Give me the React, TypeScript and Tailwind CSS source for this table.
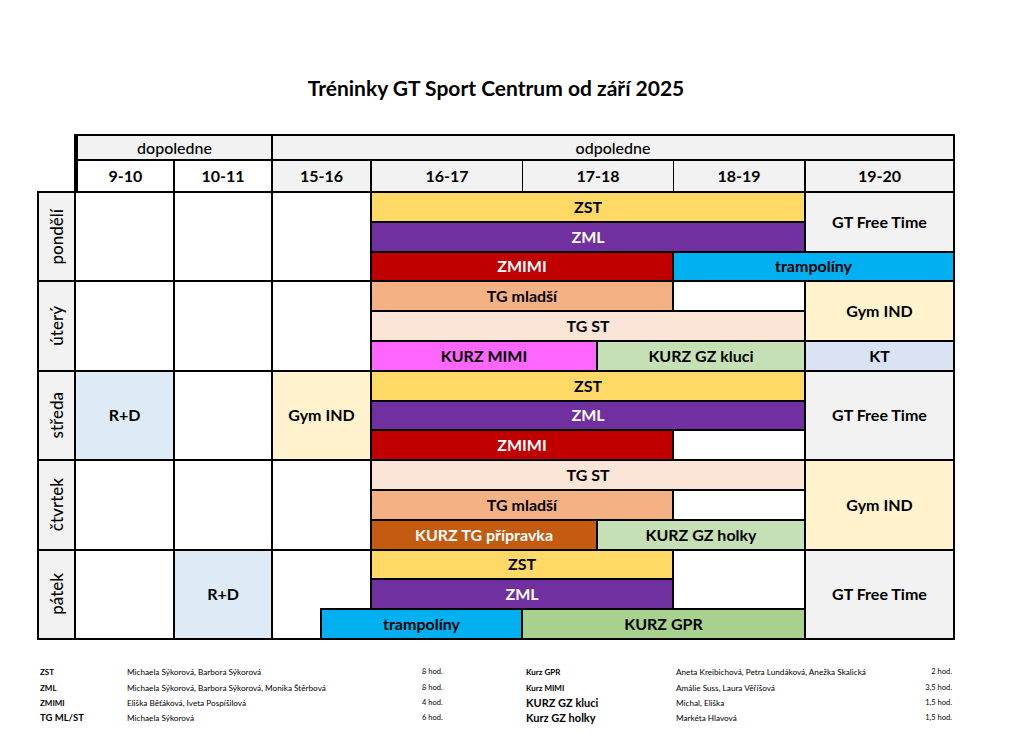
import React from 'react';

type Cell = { pos: string; bg: string; label?: string; white?: boolean; extra?: string };

const font = "font-['Lato','Liberation_Sans',sans-serif]";

// timetable cells, grid lines: 1 day | 2 9-10 | 3 10-11 | 4-5 15-16 | 6 16-17 | 7-8 17-18 | 9 18-19 | 10 19-20
const cells: Cell[] = [
  // pondělí
  { pos: 'col-start-2 col-end-3 row-start-3 row-end-6', bg: 'bg-white' },
  { pos: 'col-start-3 col-end-4 row-start-3 row-end-6', bg: 'bg-white' },
  { pos: 'col-start-4 col-end-6 row-start-3 row-end-6', bg: 'bg-white' },
  { pos: 'col-start-6 col-end-10 row-start-3 row-end-4', bg: 'bg-[#ffd966]', label: 'ZST' },
  { pos: 'col-start-6 col-end-10 row-start-4 row-end-5', bg: 'bg-[#7030a0]', label: 'ZML', white: true },
  { pos: 'col-start-10 col-end-11 row-start-3 row-end-5', bg: 'bg-[#f2f2f2]', label: 'GT Free Time' },
  { pos: 'col-start-6 col-end-9 row-start-5 row-end-6', bg: 'bg-[#c00000]', label: 'ZMIMI', white: true },
  { pos: 'col-start-9 col-end-11 row-start-5 row-end-6', bg: 'bg-[#00b0f0]', label: 'trampolíny' },

  // úterý
  { pos: 'col-start-2 col-end-3 row-start-6 row-end-9', bg: 'bg-white' },
  { pos: 'col-start-3 col-end-4 row-start-6 row-end-9', bg: 'bg-white' },
  { pos: 'col-start-4 col-end-6 row-start-6 row-end-9', bg: 'bg-white' },
  { pos: 'col-start-6 col-end-9 row-start-6 row-end-7', bg: 'bg-[#f4b183]', label: 'TG mladší' },
  { pos: 'col-start-9 col-end-10 row-start-6 row-end-7', bg: 'bg-white' },
  { pos: 'col-start-6 col-end-10 row-start-7 row-end-8', bg: 'bg-[#fbe5d6]', label: 'TG ST' },
  { pos: 'col-start-10 col-end-11 row-start-6 row-end-8', bg: 'bg-[#fff2cc]', label: 'Gym IND' },
  { pos: 'col-start-6 col-end-8 row-start-8 row-end-9', bg: 'bg-[#ff66ff]', label: 'KURZ MIMI' },
  { pos: 'col-start-8 col-end-10 row-start-8 row-end-9', bg: 'bg-[#c5e0b4]', label: 'KURZ GZ kluci' },
  { pos: 'col-start-10 col-end-11 row-start-8 row-end-9', bg: 'bg-[#dae3f3]', label: 'KT' },

  // středa
  { pos: 'col-start-2 col-end-3 row-start-9 row-end-12', bg: 'bg-[#deebf7]', label: 'R+D' },
  { pos: 'col-start-3 col-end-4 row-start-9 row-end-12', bg: 'bg-white' },
  { pos: 'col-start-4 col-end-6 row-start-9 row-end-12', bg: 'bg-[#fff2cc]', label: 'Gym IND' },
  { pos: 'col-start-6 col-end-10 row-start-9 row-end-10', bg: 'bg-[#ffd966]', label: 'ZST' },
  { pos: 'col-start-6 col-end-10 row-start-10 row-end-11', bg: 'bg-[#7030a0]', label: 'ZML', white: true },
  { pos: 'col-start-6 col-end-9 row-start-11 row-end-12', bg: 'bg-[#c00000]', label: 'ZMIMI', white: true },
  { pos: 'col-start-9 col-end-10 row-start-11 row-end-12', bg: 'bg-white' },
  { pos: 'col-start-10 col-end-11 row-start-9 row-end-12', bg: 'bg-[#f2f2f2]', label: 'GT Free Time' },

  // čtvrtek
  { pos: 'col-start-2 col-end-3 row-start-12 row-end-15', bg: 'bg-white' },
  { pos: 'col-start-3 col-end-4 row-start-12 row-end-15', bg: 'bg-white' },
  { pos: 'col-start-4 col-end-6 row-start-12 row-end-15', bg: 'bg-white' },
  { pos: 'col-start-6 col-end-10 row-start-12 row-end-13', bg: 'bg-[#fbe5d6]', label: 'TG ST' },
  { pos: 'col-start-6 col-end-9 row-start-13 row-end-14', bg: 'bg-[#f4b183]', label: 'TG mladší' },
  { pos: 'col-start-9 col-end-10 row-start-13 row-end-14', bg: 'bg-white' },
  { pos: 'col-start-6 col-end-8 row-start-14 row-end-15', bg: 'bg-[#c55a11]', label: 'KURZ TG přípravka', white: true },
  { pos: 'col-start-8 col-end-10 row-start-14 row-end-15', bg: 'bg-[#c5e0b4]', label: 'KURZ GZ holky' },
  { pos: 'col-start-10 col-end-11 row-start-12 row-end-15', bg: 'bg-[#fff2cc]', label: 'Gym IND' },

  // pátek
  { pos: 'col-start-2 col-end-3 row-start-15 row-end-18', bg: 'bg-white' },
  { pos: 'col-start-3 col-end-4 row-start-15 row-end-18', bg: 'bg-[#deebf7]', label: 'R+D' },
  { pos: 'col-start-4 col-end-6 row-start-15 row-end-18', bg: 'bg-white' },
  { pos: 'col-start-6 col-end-9 row-start-15 row-end-16', bg: 'bg-[#ffd966]', label: 'ZST' },
  { pos: 'col-start-6 col-end-9 row-start-16 row-end-17', bg: 'bg-[#7030a0]', label: 'ZML', white: true },
  { pos: 'col-start-9 col-end-10 row-start-15 row-end-17', bg: 'bg-white' },
  {
    pos: 'col-start-5 col-end-7 row-start-17 row-end-18',
    bg: 'bg-[#00b0f0]',
    label: 'trampolíny',
    extra: 'relative z-10 border-l-2 border-t-2 -ml-[2px] -mt-[2px]',
  },
  { pos: 'col-start-7 col-end-10 row-start-17 row-end-18', bg: 'bg-[#a9d18e]', label: 'KURZ GPR' },
  { pos: 'col-start-10 col-end-11 row-start-15 row-end-18', bg: 'bg-[#f2f2f2]', label: 'GT Free Time' },
];

const days = [
  { name: 'pondělí', pos: 'row-start-3 row-end-6' },
  { name: 'úterý', pos: 'row-start-6 row-end-9' },
  { name: 'středa', pos: 'row-start-9 row-end-12' },
  { name: 'čtvrtek', pos: 'row-start-12 row-end-15' },
  { name: 'pátek', pos: 'row-start-15 row-end-18' },
];

const legendLeft = [
  { k: 'ZST', who: 'Michaela Sýkorová, Barbora Sýkorová', h: '8 hod.', big: false },
  { k: 'ZML', who: 'Michaela Sýkorová, Barbora Sýkorová, Monika Štěrbová', h: '8 hod.', big: false },
  { k: 'ZMIMI', who: 'Eliška Běťáková, Iveta Pospíšilová', h: '4 hod.', big: false },
  { k: 'TG ML/ST', who: 'Michaela Sýkorová', h: '6 hod.', big: true },
];

const legendRight = [
  { k: 'Kurz GPR', who: 'Aneta Kreibichová, Petra Lundáková, Anežka Skalická', h: '2 hod.', big: false },
  { k: 'Kurz MIMI', who: 'Amálie Suss, Laura Věříšová', h: '3,5 hod.', big: false },
  { k: 'KURZ GZ kluci', who: 'Michal, Eliška', h: '1,5 hod.', big: true },
  { k: 'Kurz GZ holky', who: 'Markéta Hlavová', h: '1,5 hod.', big: true },
];

const head = 'border-r-2 border-b-2 border-black flex items-center justify-center text-[16px] text-black';

export default function App() {
  return (
    <div className={`w-[1016px] h-[734px] bg-white overflow-hidden ${font}`}>
      {/* title */}
      <div className="pt-[74px] ml-[37px] w-[918px] h-[102px] flex items-end justify-center">
        <h1 className="h-[28px] flex items-center text-[21px] font-bold text-black">
          Tréninky GT Sport Centrum od září 2025
        </h1>
      </div>

      {/* timetable */}
      <div className="mt-[32px] ml-[37px] w-[918px] grid grid-cols-[39px_99px_98px_49px_50px_151px_75px_76px_132px_149px] grid-rows-[27px_32px_repeat(15,29.8px)]">
        <div className="col-start-1 col-end-2 row-start-1 row-end-3 border-r-2 border-b-2 border-black" />

        <div className={`col-start-2 col-end-4 row-start-1 row-end-2 bg-[#f2f2f2] border-t-2 border-l-2 font-medium ${head}`}>
          dopoledne
        </div>
        <div className={`col-start-4 col-end-11 row-start-1 row-end-2 bg-[#f2f2f2] border-t-2 font-medium ${head}`}>
          odpoledne
        </div>

        <div className={`col-start-2 col-end-3 row-start-2 row-end-3 bg-white border-l-2 font-bold ${head}`}>9-10</div>
        <div className={`col-start-3 col-end-4 row-start-2 row-end-3 bg-white font-bold ${head}`}>10-11</div>
        <div className={`col-start-4 col-end-6 row-start-2 row-end-3 bg-[#f2f2f2] font-bold ${head}`}>15-16</div>
        <div className="col-start-6 col-end-7 row-start-2 row-end-3 bg-[#f2f2f2] border-r border-b-2 border-black flex items-center justify-center text-[16px] font-bold">
          16-17
        </div>
        <div className="col-start-7 col-end-9 row-start-2 row-end-3 bg-[#f2f2f2] border-r border-b-2 border-black flex items-center justify-center text-[16px] font-bold">
          17-18
        </div>
        <div className={`col-start-9 col-end-10 row-start-2 row-end-3 bg-[#f2f2f2] font-bold ${head}`}>18-19</div>
        <div className={`col-start-10 col-end-11 row-start-2 row-end-3 bg-[#f2f2f2] font-bold ${head}`}>19-20</div>

        {days.map((d) => (
          <div
            key={d.name}
            className={`col-start-1 col-end-2 ${d.pos} bg-[#f2f2f2] border-l-2 border-r-2 border-b-2 border-black flex items-center justify-center`}
          >
            <span className="[writing-mode:vertical-rl] rotate-180 text-[17px] font-medium text-black">{d.name}</span>
          </div>
        ))}

        {cells.map((c, i) => (
          <div
            key={i}
            className={`${c.pos} ${c.bg} border-r-2 border-b-2 border-black flex items-center justify-center text-[16px] font-bold whitespace-nowrap ${
              c.white ? 'text-white' : 'text-black'
            } ${c.extra ?? ''}`}
          >
            {c.label}
          </div>
        ))}
      </div>

      {/* legend */}
      <div className="mt-[24px] ml-[40px] w-[912px] flex">
        <div className="w-[486px] grid grid-cols-[87px_295px_104px] grid-rows-[16px_16px_14px_16px]">
          {legendLeft.map((r) => (
            <React.Fragment key={r.k}>
              <div className={`flex items-center font-bold ${r.big ? 'text-[9.5px]' : 'text-[8px]'}`}>{r.k}</div>
              <div className="flex items-center text-[8.2px]">{r.who}</div>
              <div className="flex items-center text-[7.5px]">{r.h}</div>
            </React.Fragment>
          ))}
        </div>
        <div className="w-[426px] grid grid-cols-[150px_230px_46px] grid-rows-[16px_16px_14px_16px]">
          {legendRight.map((r) => (
            <React.Fragment key={r.k}>
              <div className={`flex items-center font-bold ${r.big ? 'text-[11px]' : 'text-[8px]'}`}>{r.k}</div>
              <div className="flex items-center text-[8.2px]">{r.who}</div>
              <div className="flex items-center justify-end text-[7.5px]">{r.h}</div>
            </React.Fragment>
          ))}
        </div>
      </div>
    </div>
  );
}
